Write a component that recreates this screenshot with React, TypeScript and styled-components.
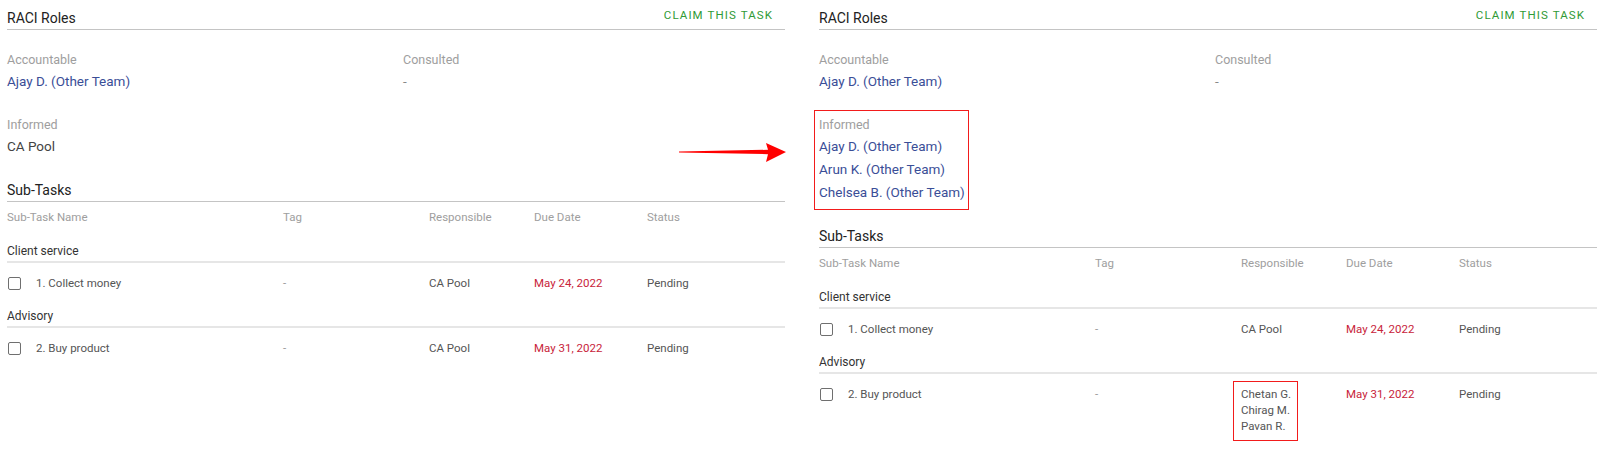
import React from "react";
import styled, { createGlobalStyle } from "styled-components";

const Global = createGlobalStyle`
  html, body { margin: 0; padding: 0; background: #fff; }
  body {
    font-family: Roboto, "Noto Sans", Arial, sans-serif;
    color: #444;
  }
`;

const Page = styled.div`
  position: relative;
  display: flex;
  gap: 34px;
  padding-left: 7px;
  width: 1600px;
  height: 455px;
  box-sizing: border-box;
  overflow: hidden;
`;

const Panel = styled.section`
  width: 778px;
  flex: none;
  display: flex;
  flex-direction: column;
`;

const RolesHeader = styled.div`
  display: flex;
  justify-content: space-between;
  height: 29px;
  border-bottom: 1px solid #c4c4c4;
`;

const SectionTitle = styled.h2`
  margin: 0;
  align-self: flex-end;
  padding-bottom: 3px;
  font-size: 14px;
  line-height: 16px;
  font-weight: 400;
  color: #222;
`;

const ClaimButton = styled.button`
  border: none;
  background: none;
  padding: 0 12px 0 8px;
  display: flex;
  align-items: center;
  font-family: inherit;
  font-size: 11.5px;
  font-weight: 400;
  letter-spacing: 1.1px;
  text-transform: uppercase;
  color: #2f9a35;
  cursor: pointer;
`;

const RolesGrid = styled.div`
  display: grid;
  grid-template-columns: 396px 1fr;
  row-gap: 24px;
  padding: 22px 0 24px;
`;

const RoleBlock = styled.div`
  display: flex;
  flex-direction: column;
`;

const Highlight = styled.div`
  position: relative;
  align-self: flex-start;
  &::after {
    content: "";
    position: absolute;
    top: -7px;
    left: -5px;
    right: -4px;
    bottom: -6px;
    border: 1.5px solid #f21b1b;
    pointer-events: none;
  }
`;

const RoleLabel = styled.div`
  font-size: 12.5px;
  line-height: 16px;
  color: #9e9e9e;
  margin-bottom: 2px;
`;

const RoleValue = styled.div<{ $tone: "link" | "plain" | "muted" }>`
  font-size: 13.5px;
  line-height: 23px;
  color: ${(p) => (p.$tone === "link" ? "#3a4e97" : p.$tone === "muted" ? "#888" : "#444")};
`;

const SubHeader = styled.div`
  border-bottom: 1px solid #c4c4c4;
`;

const SubTitle = styled(SectionTitle)`
  display: block;
`;

const Row = styled.div`
  display: grid;
  grid-template-columns: 276px 146px 105px 113px 1fr;
  align-items: start;
`;

const HeadRow = styled(Row)`
  height: 30px;
  align-items: center;
  font-size: 11.5px;
  color: #9e9e9e;
`;

const GroupRow = styled.div`
  padding: 11px 0 2px;
  font-size: 12px;
  line-height: 16px;
  color: #333;
  border-bottom: 2px solid #e6e6e6;
`;

const TaskRow = styled(Row)`
  padding: 12px 0 6px;
  font-size: 11.5px;
  line-height: 16px;
  color: #555;
`;

const NameCell = styled.div`
  display: flex;
  align-items: center;
  gap: 15px;
  padding-left: 1px;
`;

const Box = styled.span`
  width: 13px;
  height: 13px;
  box-sizing: border-box;
  border: 1.5px solid #6f6f6f;
  border-radius: 2px;
  flex: none;
`;

const Cell = styled.div<{ $tone?: "date" | "muted" }>`
  color: ${(p) => (p.$tone === "date" ? "#c8243a" : p.$tone === "muted" ? "#999" : "inherit")};
`;

const PeopleBox = styled.div`
  position: relative;
  display: inline-block;
  &::after {
    content: "";
    position: absolute;
    top: -5px;
    left: -8px;
    right: -7px;
    bottom: -7px;
    border: 1.5px solid #f21b1b;
    pointer-events: none;
  }
`;

const ArrowSvg = styled.svg`
  position: absolute;
  left: 676px;
  top: 140px;
`;

type Task = { group: string; name: string; responsible: string[]; due: string };

const tasks: Task[] = [
  { group: "Client service", name: "1. Collect money", responsible: ["CA Pool"], due: "May 24, 2022" },
  { group: "Advisory", name: "2. Buy product", responsible: ["CA Pool"], due: "May 31, 2022" },
];

const tasksAfter: Task[] = [
  { group: "Client service", name: "1. Collect money", responsible: ["CA Pool"], due: "May 24, 2022" },
  { group: "Advisory", name: "2. Buy product", responsible: ["Chetan G.", "Chirag M.", "Pavan R."], due: "May 31, 2022" },
];

function TaskTable({ items }: { items: Task[] }) {
  return (
    <>
      <SubHeader>
        <SubTitle>Sub-Tasks</SubTitle>
      </SubHeader>
      <HeadRow>
        <div>Sub-Task Name</div>
        <div>Tag</div>
        <div>Responsible</div>
        <div>Due Date</div>
        <div>Status</div>
      </HeadRow>
      {items.map((t) => (
        <React.Fragment key={t.name}>
          <GroupRow>{t.group}</GroupRow>
          <TaskRow>
            <NameCell>
              <Box />
              <span>{t.name}</span>
            </NameCell>
            <Cell $tone="muted">-</Cell>
            <Cell>
              {t.responsible.length > 1 ? (
                <PeopleBox>
                  {t.responsible.map((r) => (
                    <div key={r}>{r}</div>
                  ))}
                </PeopleBox>
              ) : (
                t.responsible[0]
              )}
            </Cell>
            <Cell $tone="date">{t.due}</Cell>
            <Cell>Pending</Cell>
          </TaskRow>
        </React.Fragment>
      ))}
    </>
  );
}

export default function App() {
  return (
    <Page>
      <Global />
      <Panel>
        <RolesHeader>
          <SectionTitle>RACI Roles</SectionTitle>
          <ClaimButton>Claim this task</ClaimButton>
        </RolesHeader>
        <RolesGrid>
          <RoleBlock>
            <RoleLabel>Accountable</RoleLabel>
            <RoleValue $tone="link">Ajay D. (Other Team)</RoleValue>
          </RoleBlock>
          <RoleBlock>
            <RoleLabel>Consulted</RoleLabel>
            <RoleValue $tone="muted">-</RoleValue>
          </RoleBlock>
          <RoleBlock>
            <RoleLabel>Informed</RoleLabel>
            <RoleValue $tone="plain">CA Pool</RoleValue>
          </RoleBlock>
        </RolesGrid>
        <TaskTable items={tasks} />
      </Panel>

      <Panel>
        <RolesHeader>
          <SectionTitle>RACI Roles</SectionTitle>
          <ClaimButton>Claim this task</ClaimButton>
        </RolesHeader>
        <RolesGrid>
          <RoleBlock>
            <RoleLabel>Accountable</RoleLabel>
            <RoleValue $tone="link">Ajay D. (Other Team)</RoleValue>
          </RoleBlock>
          <RoleBlock>
            <RoleLabel>Consulted</RoleLabel>
            <RoleValue $tone="muted">-</RoleValue>
          </RoleBlock>
          <RoleBlock>
            <Highlight>
              <RoleLabel>Informed</RoleLabel>
              <RoleValue $tone="link">Ajay D. (Other Team)</RoleValue>
              <RoleValue $tone="link">Arun K. (Other Team)</RoleValue>
              <RoleValue $tone="link">Chelsea B. (Other Team)</RoleValue>
            </Highlight>
          </RoleBlock>
        </RolesGrid>
        <TaskTable items={tasksAfter} />
      </Panel>

      <ArrowSvg width="112" height="24" viewBox="0 0 112 24">
        <polygon points="3,11.4 92,9.8 90,3 110,12 90,22 92,14.2 3,12.4" fill="#f00" />
      </ArrowSvg>
    </Page>
  );
}
